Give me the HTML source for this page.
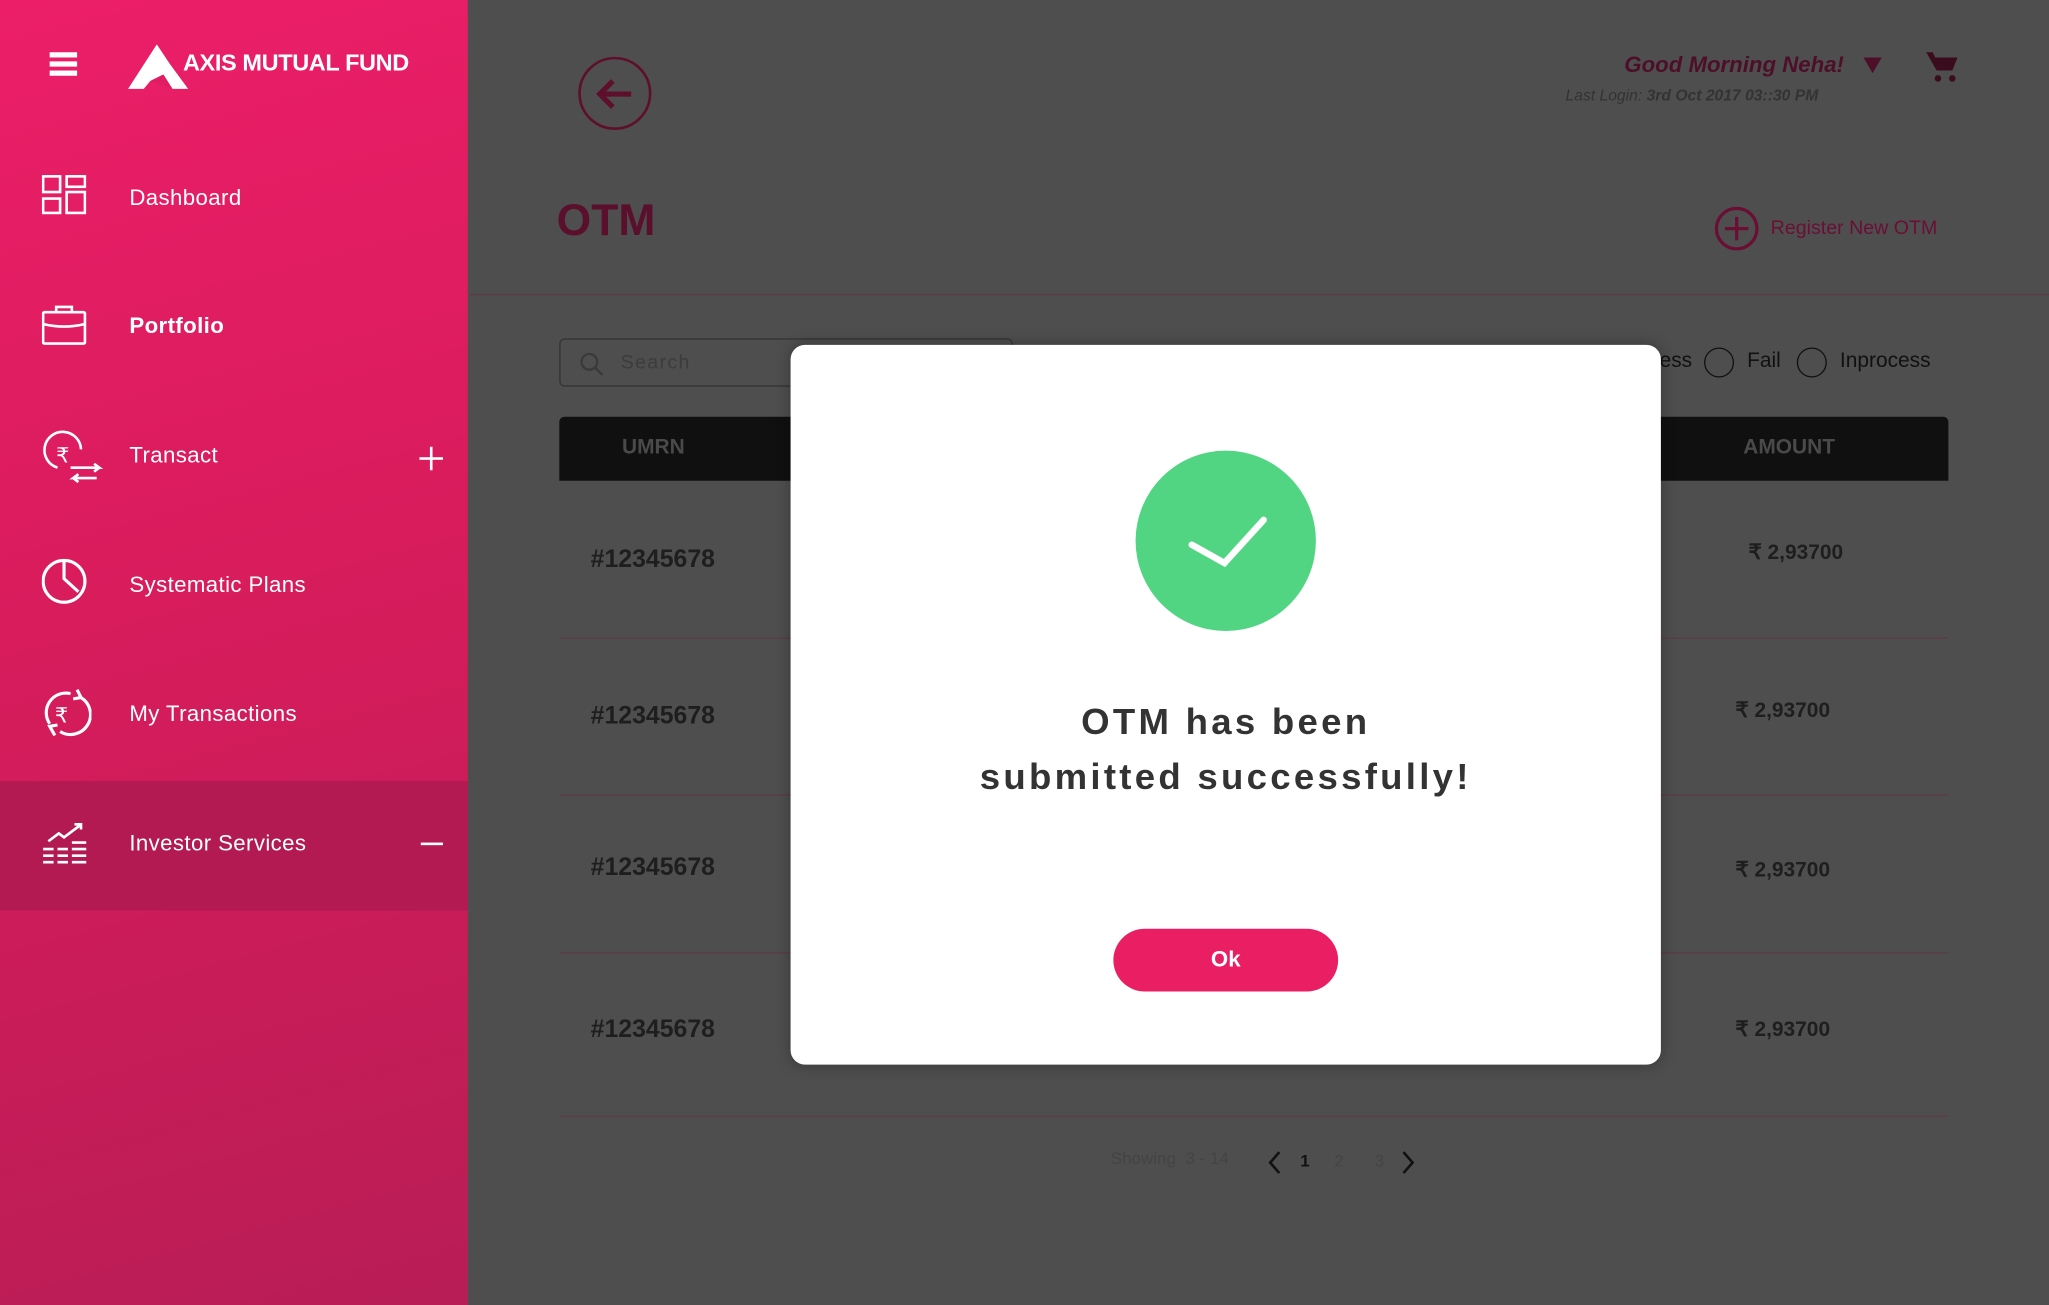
<!DOCTYPE html>
<html><head><meta charset="utf-8"><style>
*{margin:0;padding:0;box-sizing:border-box}
html,body{width:2049px;height:1305px;overflow:hidden;background:#4e4e4e;font-family:"Liberation Sans",sans-serif}
#w{position:absolute;left:0;top:0;width:1568px;height:999px;transform:scale(1.30676,1.30631);transform-origin:0 0;background:#4e4e4e}
.a{position:absolute}
#sb{left:0;top:0;width:358px;height:999px;background:linear-gradient(165deg,#ec1e68 0%,#d81c5c 45%,#b81d55 100%)}
.it{position:absolute;left:99px;color:#fff;font-size:17px;letter-spacing:.3px}
.ic{position:absolute;left:32px}
.row{position:absolute;left:428px;width:1063px;height:1px;background:#5e3a46}
.num{position:absolute;left:452px;font-size:19px;font-weight:bold;color:#1e1e1e}
.amt{position:absolute;font-size:16px;font-weight:bold;color:#1e1e1e}
</style></head><body><div id="w">
<div id="sb" class="a">
 <div class="a" style="left:38px;top:40px;width:21px;height:4px;background:#fff;box-shadow:0 7px 0 #fff,0 14px 0 #fff"></div>
 <svg class="a" style="left:98px;top:32px" width="46" height="38"><path d="M0 36 L22 2 L32 17 L46 36 L34 36 L27 25 L17 30 L12 36Z" fill="#fff"/><path d="M17 30 L27 25 L34 36Z" fill="#e01d62"/></svg>
 <div class="a" style="left:140px;top:38px;color:#fff;font-weight:bold;font-size:18px;letter-spacing:-.3px">AXIS MUTUAL FUND</div>
 <svg class="ic" style="top:134px" width="34" height="32" fill="none" stroke="#fff" stroke-width="2"><rect x="1" y="1" width="13" height="12"/><rect x="1" y="18" width="13" height="11"/><rect x="19" y="1" width="14" height="8"/><rect x="19" y="13" width="14" height="16"/></svg>
 <div class="it" style="top:142px">Dashboard</div>
 <svg class="ic" style="top:233px" width="36" height="32" fill="none" stroke="#fff" stroke-width="2"><rect x="1" y="6" width="32" height="24" rx="1"/><path d="M11 6V2h12v4M1 15q16 4 32 0"/></svg>
 <div class="it" style="top:240px;font-weight:bold">Portfolio</div>
 <svg class="ic" style="top:328px" width="48" height="46" fill="none" stroke="#fff" stroke-width="2"><path d="M30 16A14 14 0 1 0 12 30"/><text x="11" y="26" fill="#fff" stroke="none" font-size="16" font-family="DejaVu Sans">₹</text><path d="M22 30h22l-4-3M44 30l-4 3M42 38H24l4-3M24 38l4 3"/></svg>
 <div class="it" style="top:339px">Transact</div>
 <div class="a" style="left:321px;top:350px;width:18px;height:2px;background:#fff"></div><div class="a" style="left:329px;top:342px;width:2px;height:18px;background:#fff"></div>
 <svg class="ic" style="top:427px" width="36" height="36" fill="none" stroke="#fff" stroke-width="2.4"><circle cx="17" cy="18" r="16"/><path d="M17 2v14l11 10"/></svg>
 <div class="it" style="top:438px">Systematic Plans</div>
 <svg class="ic" style="top:526px" width="38" height="40" fill="none" stroke="#fff" stroke-width="2.4"><path d="M30 8A15 15 0 0 1 14 34M6 28A15 15 0 0 1 22 5"/><path d="M27 2l3 6-6 1M10 37l-4-7 6-1"/><text x="10" y="27" fill="#fff" stroke="none" font-size="16" font-family="DejaVu Sans">₹</text></svg>
 <div class="it" style="top:537px">My Transactions</div>
 <div class="a" style="left:0;top:598px;width:358px;height:99px;background:#b21a51"></div>
 <svg class="ic" style="top:626px" width="36" height="36" fill="none" stroke="#fff" stroke-width="2"><path d="M5 18l8-6 4 3 12-9M25 5h5v4M1 24h8M12 24h8M23 24h11M1 29h8M12 29h8M23 29h11M1 34h8M12 34h8M23 34h11M23 19h11"/></svg>
 <div class="it" style="top:636px">Investor Services</div>
 <div class="a" style="left:322px;top:645px;width:17px;height:2px;background:#fff"></div>
</div>
<svg class="a" style="left:442px;top:43px" width="58" height="58" fill="none" stroke="#5e0f2c" stroke-width="2"><circle cx="28.5" cy="28.5" r="27"/><path d="M41 29H17M27 19l-10 10 10 10" stroke-width="4"/></svg>
<div class="a" style="left:1243px;top:40px;color:#4d0f27;font-size:17px;font-style:italic;font-weight:bold">Good Morning Neha!</div>
<div class="a" style="left:1426px;top:44px;width:0;height:0;border-left:7px solid transparent;border-right:7px solid transparent;border-top:12px solid #4d0f27"></div>
<div class="a" style="left:1198px;top:66px;color:#333;font-size:12px;font-style:italic">Last Login: <b>3rd Oct 2017 03::30 PM</b></div>
<svg class="a" style="left:1473px;top:38px" width="26" height="26" fill="#3a0c1e"><path d="M1 2h5l2 4h17l-4 10H9z"/><circle cx="10" cy="22" r="2.5"/><circle cx="21" cy="22" r="2.5"/></svg>
<div class="a" style="left:426px;top:150px;color:#5a0f2c;font-size:34px;font-weight:bold">OTM</div>
<svg class="a" style="left:1311px;top:157px" width="36" height="36" fill="none" stroke="#6a0f33" stroke-width="2.5"><circle cx="18" cy="18" r="15.5"/><path d="M18 9v18M9 18h18"/></svg>
<div class="a" style="left:1355px;top:166px;color:#6a0f33;font-size:15px">Register New OTM</div>
<div class="a" style="left:360px;top:225px;width:1208px;height:1px;background:#5b3a45"></div>
<div class="a" style="left:428px;top:259px;width:347px;height:37px;border:1px solid #333;border-radius:4px"></div>
<svg class="a" style="left:443px;top:269px" width="20" height="20" fill="none" stroke="#3a3a3a" stroke-width="1.8"><circle cx="8" cy="8" r="6"/><path d="M12 12l6 6"/></svg>
<div class="a" style="left:475px;top:269px;color:#3c3c3c;font-size:15px;letter-spacing:1px">Search</div>
<div class="a" style="left:1270px;top:268px;color:#111;font-size:16px">ess</div>
<div class="a" style="left:1304px;top:266px;width:23px;height:23px;border:1.5px solid #111;border-radius:50%"></div>
<div class="a" style="left:1337px;top:268px;color:#111;font-size:16px">Fail</div>
<div class="a" style="left:1375px;top:266px;width:23px;height:23px;border:1.5px solid #111;border-radius:50%"></div>
<div class="a" style="left:1408px;top:268px;color:#111;font-size:16px">Inprocess</div>
<div class="a" style="left:428px;top:319px;width:1063px;height:49px;background:#101010;border-radius:4px 4px 0 0"></div>
<div class="a" style="left:476px;top:334px;color:#4a4a4a;font-size:16px;font-weight:bold">UMRN</div>
<div class="a" style="left:1334px;top:334px;color:#4a4a4a;font-size:16px;font-weight:bold">AMOUNT</div>
<div class="num" style="top:418px">#12345678</div><div class="amt" style="left:1338px;top:413px">₹ 2,93700</div>
<div class="row" style="top:488px"></div>
<div class="num" style="top:538px">#12345678</div><div class="amt" style="left:1328px;top:534px">₹ 2,93700</div>
<div class="row" style="top:608px"></div>
<div class="num" style="top:654px">#12345678</div><div class="amt" style="left:1328px;top:656px">₹ 2,93700</div>
<div class="row" style="top:729px"></div>
<div class="num" style="top:778px">#12345678</div><div class="amt" style="left:1328px;top:778px">₹ 2,93700</div>
<div class="row" style="top:854px"></div>
<div class="a" style="left:850px;top:879px;color:#444;font-size:13px">Showing &nbsp;3 - 14</div>
<svg class="a" style="left:968px;top:880px" width="120" height="20" fill="none" stroke="#111" stroke-width="2"><path d="M11 2l-7 8 7 8M106 2l7 8-7 8"/></svg>
<div class="a" style="left:995px;top:881px;color:#111;font-size:13px;font-weight:bold">1</div>
<div class="a" style="left:1021px;top:881px;color:#444;font-size:13px">2</div>
<div class="a" style="left:1052px;top:881px;color:#444;font-size:13px">3</div>
<div class="a" style="left:605px;top:264px;width:666px;height:551px;background:#fff;border-radius:11px;box-shadow:0 0 12px rgba(0,0,0,.3)"></div>
<div class="a" style="left:869px;top:345px;width:138px;height:138px;background:#52d583;border-radius:50%"></div>
<svg class="a" style="left:869px;top:345px" width="138" height="138" fill="none" stroke="#fff" stroke-width="5" stroke-linecap="round"><path d="M43 72l25 14 30-33"/></svg>
<div class="a" style="left:605px;top:532px;width:666px;text-align:center;color:#333;font-size:28px;font-weight:bold;letter-spacing:2.5px;line-height:42px">OTM has been<br>submitted successfully!</div>
<div class="a" style="left:852px;top:711px;width:172px;height:48px;background:#e91e63;border-radius:24px;color:#fff;font-weight:bold;font-size:17px;text-align:center;line-height:48px">Ok</div>
</div></body></html>
